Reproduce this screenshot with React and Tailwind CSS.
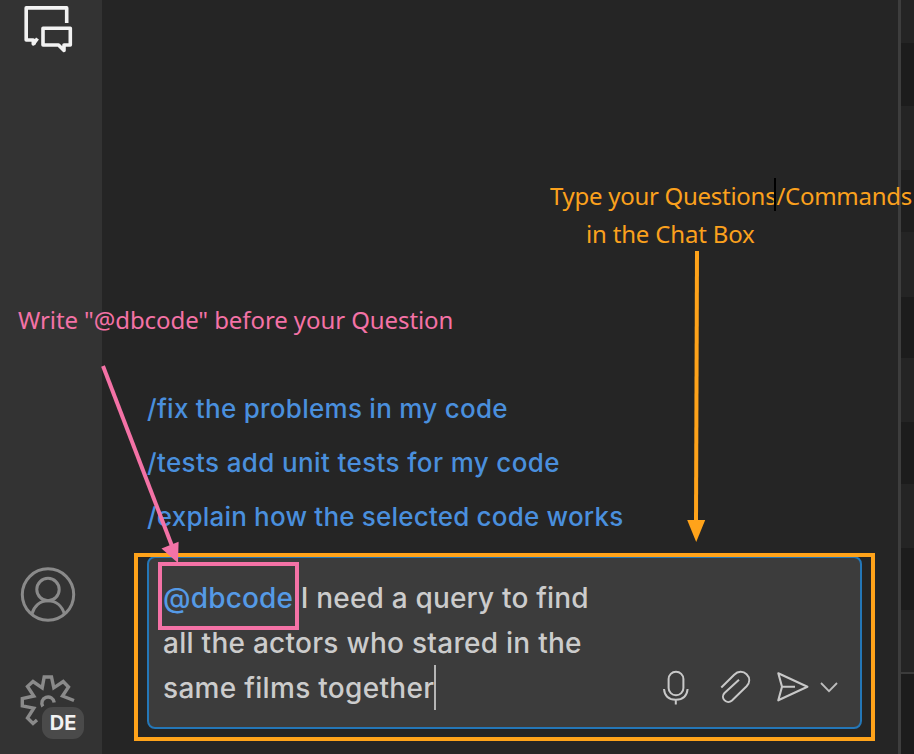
const suggestions = [
  { text: '/fix the problems in my code', spacing: 'tracking-[0.27px]' },
  { text: '/tests add unit tests for my code', spacing: 'tracking-[0.38px]' },
  { text: '/explain how the selected code works', spacing: 'tracking-[0.2px]' },
];

function ChatIcon() {
  return (
    <svg className="ml-[23px] mt-[5px] h-[50px] w-[52px]" viewBox="23 5 52 50" fill="none" stroke="#f2f2f2" strokeWidth="3.6" strokeLinejoin="round">
      <path d="M66.7 23V7.9H26.2V40H33.3V44L37.5 38.5" />
      <path d="M34 39.5V44.5" />
      <path d="M43 28.3H70.3V45H64V50.5L58.5 45H43Z" />
    </svg>
  );
}

function AccountIcon() {
  return (
    <svg className="ml-[20px] h-[56px] w-[56px]" viewBox="20 567 56 56" fill="none" stroke="#8a8a8a" strokeWidth="3">
      <circle cx="48" cy="594.5" r="25.7" />
      <circle cx="48" cy="589.5" r="11.2" />
      <path d="M32 614C34 606 40 600.8 48 600.8S62 606 64.4 614" />
    </svg>
  );
}

function GearIcon() {
  return (
    <svg className="h-[56px] w-[56px]" viewBox="20 674 56 56" fill="none" stroke="#8a8a8a" strokeWidth="3.4">
      <path d="M37 720L33 723.5L27.5 718L33.8 708.2L22.3 705.8V698.5L33.8 696L27.5 686.5L33 681.5L42.2 687.8L44.2 677H51.5L53.8 687.8L63.2 681.5L68.5 687L62.5 696L74 700.5" />
      <path d="M42.8 706.5A6.2 6.2 0 1 1 54.2 702.5" />
    </svg>
  );
}

function MicIcon() {
  return (
    <svg className="h-[36px] w-[28px]" viewBox="662 670 28 36" fill="none" stroke="#c8c8c8" strokeWidth="2">
      <rect x="668.6" y="671.7" width="14.8" height="23.6" rx="7.4" />
      <path d="M664 689C664.6 696 669 699.7 675.8 699.7S687 696 687.6 689M675.8 699.7V704.5" />
    </svg>
  );
}

function ClipIcon() {
  return (
    <svg className="ml-[29px] h-[36px] w-[32px]" viewBox="719 670 32 36" fill="none" stroke="#c8c8c8" strokeWidth="2">
      <path d="M721.3 687.5L734.2 674.7C738 671 743.2 671 746.6 674.2C750.2 677.8 750 682.5 746.6 686.2L732 700.4C729.8 702.4 726.5 702.4 724.6 700.4C722.4 698.2 722.5 695.1 724.5 693L739 679.7" />
    </svg>
  );
}

function SendIcon() {
  return (
    <svg className="ml-[24px] h-[36px] w-[36px]" viewBox="775 670 36 36" fill="none" stroke="#c8c8c8" strokeWidth="2.1" strokeLinejoin="round">
      <path d="M778.3 673.2L807.4 686.8L778.3 700.3L782 686.8ZM782 686.8H795" />
    </svg>
  );
}

function ChevronIcon() {
  return (
    <svg className="ml-[8px] h-[36px] w-[20px]" viewBox="819 670 20 36" fill="none" stroke="#bdbdbd" strokeWidth="1.8">
      <path d="M821 683L829 691.2L837 683" />
    </svg>
  );
}

function ActivityBar() {
  return (
    <aside className="flex w-[102px] shrink-0 flex-col justify-between bg-[#333333]">
      <ChatIcon />
      <div className="flex flex-col pb-[15px]">
        <AccountIcon />
        <div className="relative ml-[20px] mt-[51px] h-[65px] w-[65px]">
          <GearIcon />
          <span className="absolute left-[22px] top-[33px] flex h-[32px] w-[42px] items-center justify-center rounded-[11px] bg-[#4a4a4a] text-[20px] font-bold text-[#f2f2f2]">
            DE
          </span>
        </div>
      </div>
    </aside>
  );
}

function ChatInput() {
  return (
    <div className="ml-[45px] flex h-[173px] w-[715px] justify-between rounded-[8px] border-2 border-[#2477b8] bg-[#3c3c3c] pl-[14px] pr-[21px]">
      <div className="whitespace-nowrap pt-[18px] text-[28px] leading-[45px] font-[450] text-[#cccccc]">
        <div className="tracking-[0.18px]"><span className="text-[#559ae6]">@dbcode</span> I need a query to find</div>
        <div className="tracking-[0.27px]">all the actors who stared in the</div>
        <div className="flex items-center tracking-[0.3px]">
          same films together<span className="h-[45px] w-[2px] -translate-y-px bg-[#b5b5b5]" />
        </div>
      </div>
      <div className="flex items-end pb-[21px]">
        <MicIcon />
        <ClipIcon />
        <SendIcon />
        <ChevronIcon />
      </div>
    </div>
  );
}

function Annotations() {
  return (
    <div className="pointer-events-none absolute inset-0 whitespace-pre font-['Noto_Sans',sans-serif] text-[24px] leading-[38px]">
      <div className="absolute left-[134px] top-[553px] h-[188px] w-[741px] border-4 border-[#ffa31a]" />
      <div className="absolute left-[158px] top-[562px] h-[68px] w-[141px] border-4 border-[#f472a6]" />
      <svg className="absolute inset-0 h-[754px] w-[914px]" viewBox="0 0 914 754">
        <path d="M697 251L696 522" stroke="#ffa31a" strokeWidth="4" />
        <path d="M687.2 520H705.2L696.2 542Z" fill="#ffa31a" />
        <path d="M103 366L172 546" stroke="#f472a6" strokeWidth="4" />
        <path d="M161.5 548.5L178.6 541.8L178 563Z" fill="#f472a6" />
      </svg>
      <div className="absolute left-[550px] top-[177px] tracking-[-0.28px] text-[#fba11d]">Type your Questions/Commands</div>
      <div className="absolute left-[586px] top-[215px] tracking-[-0.18px] text-[#fba11d]">in the Chat Box</div>
      <div className="absolute left-[774px] top-[178px] h-[33px] w-[2px] bg-black" />
      <div className="absolute left-[18px] top-[301px] tracking-[-0.09px] text-[#f472a6]">Write "@dbcode" before your Question</div>
    </div>
  );
}

export default function App() {
  return (
    <div className="relative flex h-[754px] w-[914px] overflow-hidden bg-[#252525] font-['Inter',sans-serif]">
      <ActivityBar />
      <main className="flex min-w-0 flex-1 flex-col justify-end pb-[25px]">
        <div className="ml-[45px] flex flex-col whitespace-nowrap pb-[12px] text-[26px] leading-[54px] font-[450] text-[#4a8fdd]">
          {suggestions.map((s) => (
            <div key={s.text} className={s.spacing}>{s.text}</div>
          ))}
        </div>
        <ChatInput />
      </main>
      <div className="flex w-[16px] shrink-0 flex-col border-l-3 border-[#3d3d3d] bg-[#242424]">
        <div className="h-[43px]" />
        <div className="h-[63px] bg-[#1c1c1c]" />
        <div className="h-[64px]" />
        <div className="h-[62px] bg-[#1e1e1e]" />
        <div className="h-[65px]" />
        <div className="h-[61px] bg-[#1c1c1c]" />
        <div className="h-[64px]" />
        <div className="h-[62px] bg-[#1c1c1c]" />
        <div className="h-[64px]" />
        <div className="h-[62px] bg-[#1c1c1c]" />
        <div className="h-[62px]" />
        <div className="flex-1 border-t-2 border-[#3b3b3b] bg-[#1c1c1c]" />
      </div>
      <Annotations />
    </div>
  );
}
